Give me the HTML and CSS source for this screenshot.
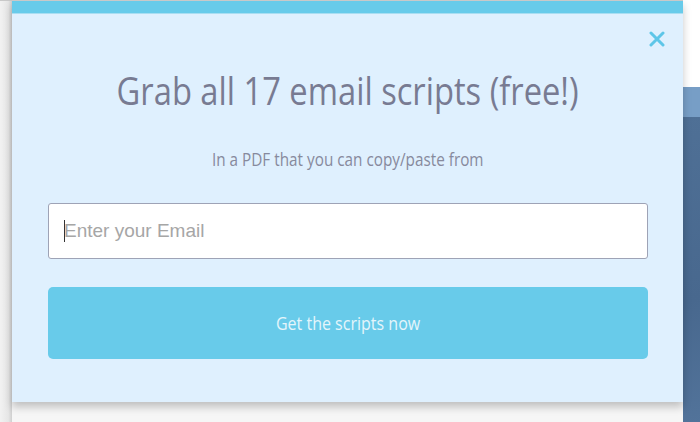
FILE: index.html
```html
<!DOCTYPE html>
<html lang="en">
<head>
    <meta charset="UTF-8">
    <meta name="viewport" content="width=device-width, initial-scale=1.0">
    <title>Email scripts</title>
    <link rel="stylesheet" href="styles.css">
</head>
<body>

    <div class="page">
        <div class="edge"></div>

        <div class="popup">
            <div class="popupTop"></div>
            <div class="popupBody">
                <div class="closeRow">
                    <svg class="close" width="16" height="16" viewBox="0 0 16 16">
                        <path d="M2 2 L14 14 M14 2 L2 14" stroke="#5ec6e8" stroke-width="3" stroke-linecap="round"/>
                    </svg>
                </div>
                <h1><span>Grab all 17 email scripts (free!)</span></h1>
                <p class="sub"><span>In a PDF that you can copy/paste from</span></p>

                <form action="" class="optin">
                    <div class="field"><span class="caret"></span><input type="text" placeholder="Enter your Email"></div>
                    <button type="submit"><span>Get the scripts now</span></button>
                </form>
            </div>
        </div>

        <!-- page behind the popup -->
        <div class="behind">
            <div class="behindTop"></div>
            <div class="behindNav"></div>
            <div class="behindHero"></div>
        </div>
    </div>

</body>
</html>
```

FILE: styles.css
```css
body{
    margin: 0;
    padding: 0;
    background: #f6f6f6;
    font-family: "Open Sans", sans-serif;
    overflow: hidden;
}

.page{
    display: flex;
    height: 422px;
}

.edge{
    width: 12px;
    background: linear-gradient(to right, #f2f2f2, #e6e6e6 70%, #cfcfcf);
    border-top: 1px solid #c9c9c9;
}

.popup{
    width: 671px;
    height: 402px;
    display: flex;
    flex-direction: column;
    background: #dff0fe;
    box-shadow: 0 5px 8px rgba(0,0,0,0.22);
    position: relative;
    z-index: 1;
}
.popupTop{
    height: 12px;
    background: #68cbea;
    border-top: 1px solid #c9c9c9;
    border-bottom: 1px solid #a9def2;
}
.popupBody{
    padding: 0 35px 0 36px;
}

.closeRow{
    display: flex;
    justify-content: flex-end;
    align-items: flex-start;
    height: 53px;
    padding-top: 17px;
    box-sizing: border-box;
    margin-right: -17px;
}

h1{
    margin: 0;
    text-align: center;
    color: #787b92;
    font-size: 38px;
    font-weight: 400;
    line-height: 46px;
}
h1 span,
.sub span,
.optin button span{
    display: inline-block;
    white-space: nowrap;
}
h1 span{
    transform: scaleX(0.86);
}
.sub{
    margin: 34px 0 0;
    text-align: center;
    color: #878a9d;
    font-size: 18px;
    line-height: 24px;
}
.sub span{
    transform: scaleX(0.85);
}

.optin{
    display: flex;
    flex-direction: column;
    gap: 28px;
    margin-top: 32px;
}
.field{
    height: 56px;
    background: white;
    border: 1px solid #9ea3b6;
    border-radius: 3px;
    display: flex;
    align-items: center;
    padding-left: 15px;
    box-sizing: border-box;
}
.caret{
    width: 1px;
    height: 22px;
    background: #333;
    margin-right: -1px;
}
.field input{
    border: none;
    outline: none;
    background: transparent;
    flex: 1;
    font-family: "Liberation Sans", Arial, sans-serif;
    font-size: 19px;
    padding: 0;
    color: #444;
}
.field input::placeholder{
    color: #a6a6a6;
}

.optin button{
    height: 72px;
    border: none;
    border-radius: 5px;
    background: #68cbea;
    color: #e4f5fb;
    font-family: "Open Sans", sans-serif;
    font-size: 18px;
}
.optin button span{
    transform: scaleX(0.89);
}

.behind{
    flex: 1;
    display: flex;
    flex-direction: column;
}
.behindTop{
    height: 87px;
    background: white;
}
.behindNav{
    height: 30px;
    background: #779ec6;
}
.behindHero{
    flex: 1;
    background: linear-gradient(160deg, #4f7096, #48688e 60%, #52739a);
}
```
